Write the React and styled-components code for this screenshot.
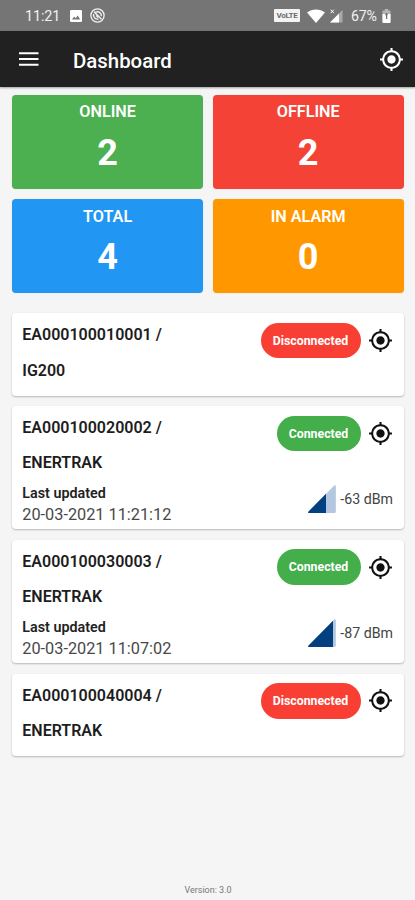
import React from "react";
import styled, { createGlobalStyle } from "styled-components";
import { MdMyLocation } from "react-icons/md";

const GlobalStyle = createGlobalStyle`
  * { box-sizing: border-box; }
  body { margin: 0; background: #f5f5f5; font-family: Roboto, sans-serif; }
`;

const Screen = styled.div`
  display: flex;
  flex-direction: column;
  height: 900px;
  width: 415px;
  background: #f5f5f5;
  overflow: hidden;
`;

const StatusBar = styled.div`
  flex: none;
  height: 31.4px;
  background: #757575;
  color: #f1f1f1;
  display: flex;
  align-items: center;
  justify-content: space-between;
  padding: 0 24px 0 25px;
  font-size: 14.4px;
`;

const StatusGroup = styled.div`
  display: flex;
  align-items: center;
  height: 100%;
  svg { display: block; }
`;

const LeftIcons = styled.div`
  display: flex;
  align-items: center;
  gap: 8px;
`;

const NetworkIcons = styled.div`
  display: flex;
  align-items: center;
  gap: 5px;
`;

const Clock = styled.span`
  width: 45px;
  padding-top: 1px;
  letter-spacing: -0.1px;
`;

const Percent = styled.span`
  margin-left: 8px;
  width: 31px;
  font-size: 14.2px;
  letter-spacing: -0.2px;
`;

const VolteBadge = styled.span`
  width: 26px;
  height: 13px;
  margin-right: 7px;
  border-radius: 1px;
  background: #f4f4f4;
  color: #6c6c6c;
  font-size: 8px;
  font-weight: 700;
  line-height: 13px;
  letter-spacing: -0.3px;
  text-align: center;
`;

const AppBar = styled.header`
  flex: none;
  height: 55.6px;
  background: #212121;
  color: #fff;
  display: flex;
  align-items: center;
  padding: 0 11.5px 0 19px;
  box-shadow: 0 1px 2px rgba(0, 0, 0, 0.35);
  svg { display: block; }
`;

const Title = styled.h1`
  flex: 1;
  margin: 3px 0 0 34px;
  font-size: 20.4px;
  font-weight: 500;
  line-height: 24px;
`;

const Tiles = styled.section`
  display: grid;
  grid-template-columns: 1fr 1fr;
  gap: 10.4px 10px;
  padding: 8px 11.5px 0 12.3px;
`;

const Tile = styled.div`
  height: 94px;
  border-radius: 4px;
  background: ${(p) => p.$color};
  color: #fff;
  text-align: center;
  font-weight: 700;
  box-shadow: 0 0 1px rgba(0, 0, 0, 0.2);
`;

const TileLabel = styled.div`
  padding-top: 7.4px;
  font-size: 16.2px;
  line-height: 20px;
  font-weight: 600;
`;

const TileValue = styled.div`
  margin-top: 9.5px;
  font-size: 36px;
  line-height: 42px;
`;

const DeviceList = styled.section`
  display: flex;
  flex-direction: column;
  gap: 10.3px;
  padding: 19.8px 11.5px 0 12.3px;
`;

const Card = styled.article`
  height: ${(p) => (p.$detailed ? 123.5 : 82.5)}px;
  padding: 4.3px 10.5px 0 10px;
  border-radius: 4px;
  background: #fff;
  box-shadow: 0 1px 2px rgba(0, 0, 0, 0.26);
`;

const CardTop = styled.div`
  display: flex;
  justify-content: space-between;
  height: 70px;
`;

const DeviceName = styled.div`
  font-size: 16px;
  line-height: 35.2px;
  font-weight: 600;
  color: #1d1d1d;
`;

const Actions = styled.div`
  display: flex;
  align-items: center;
  height: 35px;
  margin-top: 5.6px;
  color: #111;
  svg { display: block; }
`;

const StatusPill = styled.span`
  width: ${(p) => (p.$connected ? 84 : 100)}px;
  height: 35.5px;
  margin-right: 7.5px;
  border-radius: 18px;
  background: ${(p) => (p.$connected ? "#43ae4a" : "#f93f34")};
  color: #fff;
  font-size: 12.3px;
  font-weight: 700;
  line-height: 36.5px;
  text-align: center;
`;

const CardBottom = styled.div`
  display: flex;
  justify-content: space-between;
  align-items: flex-start;
  padding-top: 2.7px;
`;

const UpdatedLabel = styled.div`
  font-size: 14.3px;
  line-height: 20px;
  font-weight: 600;
  color: #222;
`;

const UpdatedTime = styled.div`
  font-size: 16.3px;
  line-height: 23px;
  color: #484848;
`;

const Signal = styled.div`
  display: flex;
  align-items: center;
  gap: 4.5px;
  padding-top: 2.5px;
  font-size: 14.2px;
  line-height: 28px;
  color: #444;
  svg { display: block; }
`;

const Footer = styled.footer`
  margin-top: auto;
  height: 18px;
  padding-left: 1px;
  text-align: center;
  font-size: 9px;
  line-height: 16px;
  color: #777;
`;

const MenuIcon = () => (
  <svg width="20" height="14" viewBox="0 0 20 14">
    <path d="M0 1.2h19.5M0 7h19.5M0 12.8h19.5" stroke="#fff" strokeWidth="2.1" />
  </svg>
);

const PictureIcon = () => (
  <svg width="12" height="12" viewBox="0 0 12 12">
    <rect width="12" height="12" rx="1.3" fill="#fff" />
    <path d="M2 9.5l2.2-3 1.5 1.8 2-2.7 2.5 3.9z" fill="#757575" />
  </svg>
);

const SyncOffIcon = () => (
  <svg width="15" height="15" viewBox="0 0 15 15" fill="none" stroke="#f1f1f1">
    <circle cx="7.5" cy="7.5" r="6.6" strokeWidth="1.3" />
    <path d="M4 3.8l7.5 7.4M5.5 4.2c3-1.5 6.2.6 5.8 4M3.7 6c-.8 3 1.5 5.6 4.8 5.1M6.2 7.6l2 2" strokeWidth="1.4" />
  </svg>
);

const WifiIcon = () => (
  <svg width="18" height="14" viewBox="0 0 18 14">
    <path d="M0 3.6C5.2-.6 12.8-.6 18 3.6L9 14z" fill="#fff" />
  </svg>
);

const MobileIcon = () => (
  <svg width="13" height="14" viewBox="0 0 13 14">
    <path d="M12.5 1v12.5H0z" fill="#aaa" />
    <path d="M9 4.5v9H0z" fill="#fff" />
    <path d="M.7.7l3.2 3.5M3.9.7L.7 4.2" stroke="#fff" strokeWidth="1" />
  </svg>
);

const BatteryIcon = () => (
  <svg width="9" height="14" viewBox="0 0 9 14">
    <path d="M2.8 0h3.4v1.5H8.5V13a1 1 0 0 1-1 1h-6a1 1 0 0 1-1-1V1.5h2.3z" fill="#b5b5b5" />
    <path d="M.5 5h8v8a1 1 0 0 1-1 1h-6a1 1 0 0 1-1-1z" fill="#fff" />
    <path d="M4.6 4v6M3.2 5.5h2.5" stroke="#757575" strokeWidth="1.3" />
  </svg>
);

const SIGNAL_SHAPE =
  "M.3 26.7 26.3.5Q27.8-.3 27.8 1.5V26.5Q27.8 28 26.3 28H.8Q-.4 27.7.3 26.7Z";

const SignalIcon = ({ level }) => (
  <svg width="28" height="28" viewBox="0 0 28 28">
    <defs>
      <clipPath id={`level-${level}`}>
        <rect width={level} height="28" />
      </clipPath>
    </defs>
    <path d={SIGNAL_SHAPE} fill="#b3c7e0" />
    <path d={SIGNAL_SHAPE} fill="#04407f" clipPath={`url(#level-${level})`} />
  </svg>
);

const tiles = [
  { label: "ONLINE", value: 2, color: "#4caf50" },
  { label: "OFFLINE", value: 2, color: "#f44336" },
  { label: "TOTAL", value: 4, color: "#2196f3" },
  { label: "IN ALARM", value: 0, color: "#ff9800" },
];

const devices = [
  { id: "EA000100010001", model: "IG200", connected: false },
  { id: "EA000100020002", model: "ENERTRAK", connected: true, updated: "20-03-2021 11:21:12", dbm: -63, level: 18 },
  { id: "EA000100030003", model: "ENERTRAK", connected: true, updated: "20-03-2021 11:07:02", dbm: -87, level: 25 },
  { id: "EA000100040004", model: "ENERTRAK", connected: false },
];

const DeviceCard = ({ device }) => (
  <Card $detailed={device.connected}>
    <CardTop>
      <DeviceName>
        {device.id} /<br />
        {device.model}
      </DeviceName>
      <Actions>
        <StatusPill $connected={device.connected}>
          {device.connected ? "Connected" : "Disconnected"}
        </StatusPill>
        <MdMyLocation size={25} />
      </Actions>
    </CardTop>
    {device.connected && (
      <CardBottom>
        <div>
          <UpdatedLabel>Last updated</UpdatedLabel>
          <UpdatedTime>{device.updated}</UpdatedTime>
        </div>
        <Signal>
          <SignalIcon level={device.level} />
          <span>{device.dbm} dBm</span>
        </Signal>
      </CardBottom>
    )}
  </Card>
);

export default function App() {
  return (
    <Screen>
      <GlobalStyle />
      <StatusBar>
        <StatusGroup>
          <Clock>11:21</Clock>
          <LeftIcons>
            <PictureIcon />
            <SyncOffIcon />
          </LeftIcons>
        </StatusGroup>
        <StatusGroup>
          <VolteBadge>VoLTE</VolteBadge>
          <NetworkIcons>
            <WifiIcon />
            <MobileIcon />
          </NetworkIcons>
          <Percent>67%</Percent>
          <BatteryIcon />
        </StatusGroup>
      </StatusBar>
      <AppBar>
        <MenuIcon />
        <Title>Dashboard</Title>
        <MdMyLocation size={25} />
      </AppBar>
      <Tiles>
        {tiles.map((t) => (
          <Tile key={t.label} $color={t.color}>
            <TileLabel>{t.label}</TileLabel>
            <TileValue>{t.value}</TileValue>
          </Tile>
        ))}
      </Tiles>
      <DeviceList>
        {devices.map((d) => (
          <DeviceCard key={d.id} device={d} />
        ))}
      </DeviceList>
      <Footer>Version: 3.0</Footer>
    </Screen>
  );
}
